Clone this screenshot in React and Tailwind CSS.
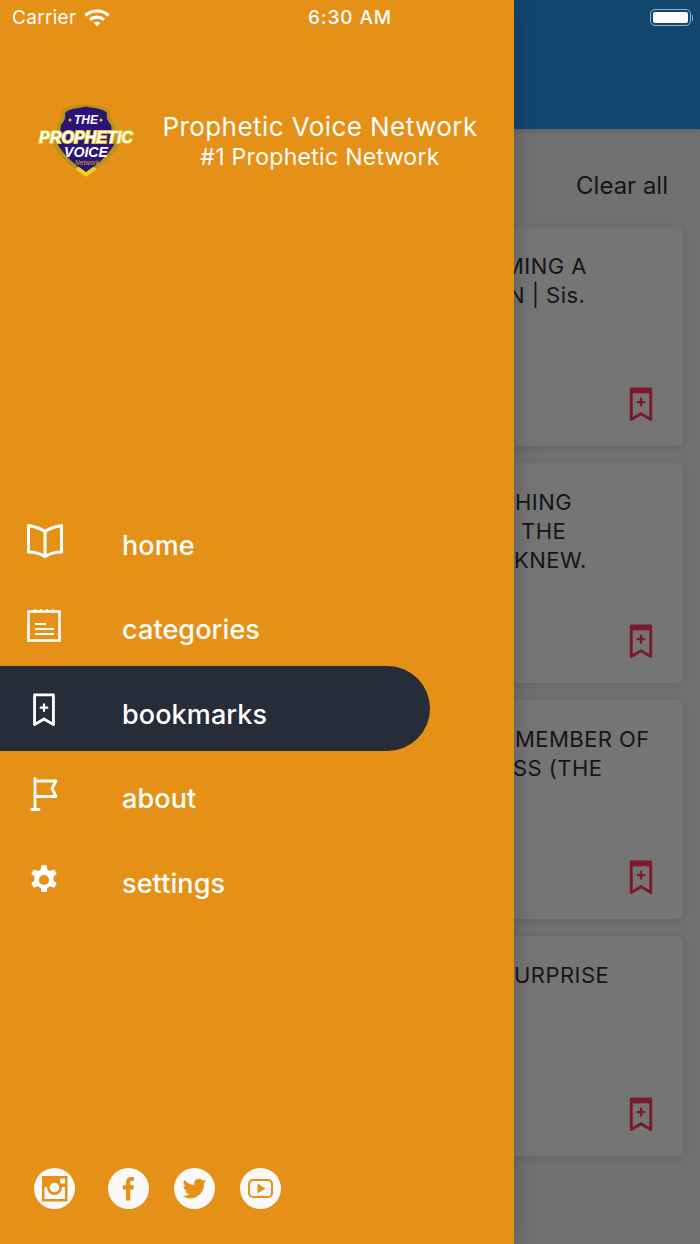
import React from "react";

const font = { fontFamily: "Inter, 'Liberation Sans', sans-serif" };

function BookmarkPlus({ className, top }) {
  return (
    <svg viewBox="0 0 24 36" className={className} fill="none" stroke="currentColor" strokeWidth="3" strokeLinejoin="round" strokeLinecap="round">
      <path d="M2 2H22V33.500L12 27.500L2 33.500Z" />
      {top && <path d="M2 4H22" strokeWidth="5" strokeLinecap="butt" />}
      <path d="M12 12V19M8.500 15.500H15.500" strokeWidth="2.400" />
    </svg>
  );
}

function BookIcon() {
  return (
    <svg viewBox="0 0 36 34" className="w-9 h-[34px]" fill="none" stroke="currentColor" strokeWidth="3" strokeLinejoin="round" strokeLinecap="round">
      <path d="M1.500 1.500C7 2.500 13 4 18 7.500C23 4 29 2.500 34.500 1.500V28C29 28 23.500 29 18 32.500C12.500 29 7 28 1.500 28Z" />
      <path d="M18 7.500V32" />
    </svg>
  );
}

function NotesIcon() {
  return (
    <svg viewBox="0 0 34 34" className="w-[34px] h-[34px]" fill="none" stroke="currentColor" strokeWidth="2.600" strokeLinecap="butt">
      <rect x="1.500" y="3.500" width="31" height="29" />
      <path d="M8 1V4M14 1V4M20 1V4M26 1V4" strokeWidth="1.800" />
      <path d="M8 16H19M8 21H27M8 26H27" strokeWidth="2" />
    </svg>
  );
}

function FlagIcon() {
  return (
    <svg viewBox="0 0 28 34" className="w-7 h-[34px]" fill="none" stroke="currentColor" strokeWidth="2.800" strokeLinecap="round" strokeLinejoin="round">
      <path d="M5 1.500V32.500M1.500 32.500H9" />
      <path d="M5 4H26L22 11.500L26 19.500H5" />
    </svg>
  );
}

function GearIcon() {
  return (
    <svg viewBox="0 0 24 24" className="w-[34px] h-[34px] mt-[2px]" fill="currentColor">
      <path fillRule="evenodd" d="M13.800 1.500h-3.600l-.5 3a7.500 7.500 0 0 0-2 1.150L4.800 4.600 3 7.700l2.350 1.950a7.600 7.600 0 0 0 0 2.700L3 14.300l1.800 3.100 2.900-1.050a7.500 7.500 0 0 0 2 1.150l.5 3h3.600l.5-3a7.500 7.500 0 0 0 2-1.150l2.900 1.050 1.800-3.100-2.350-1.950a7.600 7.600 0 0 0 0-2.700L21 7.700l-1.800-3.100-2.900 1.050a7.500 7.500 0 0 0-2-1.150ZM12 8.400a3.600 3.600 0 1 1 0 7.200 3.600 3.600 0 0 1 0-7.200Z" />
    </svg>
  );
}

function Logo() {
  return (
    <svg viewBox="0 0 100 76" className="w-[100px] h-[76px]" style={{ fontFamily: "'Liberation Sans', sans-serif" }}>
      <path d="M50 1C40 3 31 3 26 8C27 13 25 16 22 20L18 43C25 56 39 66 50 74C61 66 75 56 82 43L78 20C75 16 73 13 74 8C69 3 60 3 50 1Z" fill="#b8921a" />
      <path d="M50 3.500C41 5.500 33 5.500 29 10C30 15 28 18 25 22L22 42C29 54 41 63 50 70C59 63 71 54 78 42L75 22C72 18 70 15 71 10C67 5.500 59 5.500 50 3.500Z" fill="#2a1478" />
      <path d="M50 74L39 66L43 64L50 69L57 64L61 66Z" fill="#f4d21f" />
      <circle cx="34" cy="17" r="1.500" fill="#f1c40f" />
      <circle cx="65" cy="17" r="1.500" fill="#f1c40f" />
      <text x="50" y="21" textAnchor="middle" fontSize="12" fontStyle="italic" fontWeight="700" fill="#fff">THE</text>
      <text x="3" y="40" fontSize="16" fontStyle="italic" fontWeight="700" fill="#fff" stroke="#e8c52a" strokeWidth="2" paintOrder="stroke" textLength="94" lengthAdjust="spacingAndGlyphs">PROPHETIC</text>
      <text x="50" y="54" textAnchor="middle" fontSize="14" fontStyle="italic" fontWeight="700" fill="#fff" textLength="44" lengthAdjust="spacingAndGlyphs">VOICE</text>
      <text x="51" y="62" textAnchor="middle" fontSize="6.500" fontStyle="italic" fill="#d9a520">Network</text>
    </svg>
  );
}

function Instagram() {
  return (
    <svg viewBox="0 0 41 41" className="w-[41px] h-[41px]">
      <circle cx="20.500" cy="20.500" r="20.500" fill="#f9f9f9" />
      <rect x="8" y="8" width="25.500" height="25.500" fill="#e59016" />
      <rect x="10.500" y="19" width="20.500" height="12" fill="#f9f9f9" />
      <rect x="26" y="10.500" width="5" height="5" fill="#f9f9f9" />
      <circle cx="20.500" cy="19.500" r="7.500" fill="#e59016" />
      <circle cx="20.500" cy="19.500" r="4.800" fill="#f9f9f9" />
    </svg>
  );
}

function Facebook() {
  return (
    <svg viewBox="0 0 41 41" className="w-[41px] h-[41px]">
      <circle cx="20.500" cy="20.500" r="20.500" fill="#f9f9f9" />
      <path d="M18 32.500V21.500H14.800V17.200H18V14.300C18 10.800 20 9 23.100 9C24.300 9 25.400 9.100 25.900 9.200V13H23.700C22.400 13 22.300 13.700 22.300 14.700V17.200H25.800L25.300 21.500H22.300V32.500Z" fill="#e59016" />
    </svg>
  );
}

function Twitter() {
  return (
    <svg viewBox="0 0 41 41" className="w-[41px] h-[41px]">
      <circle cx="20.500" cy="20.500" r="20.500" fill="#f9f9f9" />
      <g transform="translate(8.500 8.500)">
        <path fill="#e59016" d="M24 4.600a9.800 9.800 0 0 1-2.800.8 4.900 4.900 0 0 0 2.200-2.700 9.900 9.900 0 0 1-3.100 1.200 4.900 4.900 0 0 0-8.400 4.500A14 14 0 0 1 1.700 3.200a4.900 4.900 0 0 0 1.500 6.600 4.900 4.900 0 0 1-2.200-.6 4.900 4.900 0 0 0 3.900 4.900 4.900 4.900 0 0 1-2.200.1 4.900 4.900 0 0 0 4.600 3.400A9.900 9.900 0 0 1 0 19.600 14 14 0 0 0 21.500 7.200c0-.2 0-.4 0-.6A10 10 0 0 0 24 4.600Z" />
      </g>
    </svg>
  );
}

function YouTube() {
  return (
    <svg viewBox="0 0 41 41" className="w-[41px] h-[41px]">
      <circle cx="20.500" cy="20.500" r="20.500" fill="#f9f9f9" />
      <rect x="8" y="11" width="25" height="19" rx="5" fill="#e59016" />
      <rect x="10" y="13" width="21" height="15" rx="3.500" fill="#f9f9f9" />
      <path d="M17.500 15.500L25.500 20.500L17.500 25.500Z" fill="#e59016" />
    </svg>
  );
}

function Wifi() {
  return (
    <svg viewBox="0 0 26 18" className="w-[26px] h-[18px]" fill="none" stroke="#fff" strokeLinecap="butt">
      <path d="M1.500 6.500C7.500 0.500 18.500 0.500 24.500 6.500" strokeWidth="3.200" />
      <path d="M6 10.800C10 7.300 16 7.300 20 10.800" strokeWidth="3.200" />
      <path d="M13 17.500L9.500 13.800C11.500 12.300 14.500 12.300 16.500 13.800Z" fill="#fff" stroke="none" />
    </svg>
  );
}

const cards = [
  [["MING A", 504], ["N | Sis.", 508]],
  [["HING", 515], ["THE", 521], ["KNEW.", 514]],
  [["MEMBER OF", 515], ["SS (THE", 513]],
  [["URPRISE", 514]],
];

const navItems = [
  { label: "home", icon: <BookIcon />, w: "pl-[27px]" },
  { label: "categories", icon: <NotesIcon />, w: "pl-[27px]" },
  { label: "bookmarks", icon: <BookmarkPlus className="w-[24px] h-[34px]" />, w: "pl-[32px]", active: true },
  { label: "about", icon: <FlagIcon />, w: "pl-[30px]" },
  { label: "settings", icon: <GearIcon />, w: "pl-[27px]" },
];

export default function App() {
  return (
    <div style={font} className="relative w-[700px] h-[1244px] overflow-hidden bg-[#717171]">
      {/* Page behind the drawer */}
      <div className="h-[129px] bg-[#11466f] shadow-[0_2px_4px_rgba(0,0,0,0.15)] flex justify-end pt-[9px] pr-[7px]">
        <div className="flex items-center h-[17px] gap-[1px]">
          <div className="w-[41px] h-[17px] rounded-[5px] border border-[#8fb0c8] p-[2px]">
            <div className="w-full h-full bg-white rounded-[2px]" />
          </div>
          <div className="w-[1.500px] h-[6px] bg-[#8fb0c8] rounded-r-sm" />
        </div>
      </div>
      <div className="flex justify-end pr-[32px] pt-[42px] h-[98px] text-[24px] leading-[30px] text-[#14161a]">Clear all</div>
      <div className="flex flex-col gap-[17px] px-[17px]">
        {cards.map((lines, i) => (
          <div key={i} className="relative h-[219.400px] rounded-[5px] bg-[#757575] shadow-[0_2px_10px_rgba(0,0,0,0.1)]">
            <div className="flex flex-col pt-[25px] text-[22px] leading-[29px] tracking-[0.45px] text-[#14161a]">
              {lines.map(([t, x]) => (
                <span key={t} style={{ marginLeft: x - 17 }}>{t}</span>
              ))}
            </div>
            <div className="absolute right-[30px] bottom-[24px] text-[#7c1a2b]">
              <BookmarkPlus top className="w-[24px] h-[35px]" />
            </div>
          </div>
        ))}
      </div>

      {/* Drawer */}
      <aside className="absolute inset-y-0 left-0 w-[514px] bg-[#e59016] text-white flex flex-col shadow-[0_0_22px_rgba(0,0,0,0.22)]">
        <div className="relative h-[36px] flex items-center pl-[12px] gap-[8px] text-[19px] tracking-[0.3px]">
          <span>Carrier</span>
          <Wifi />
          <span className="absolute left-0 w-[700px] text-center font-medium tracking-[0.9px] text-[19px]">6:30 AM</span>
        </div>
        <div className="flex items-center pl-[36px] pt-[67px]">
          <Logo />
          <div className="w-[368px] flex flex-col items-center">
            <span className="text-[26px] leading-[32px] tracking-[0.43px]">Prophetic Voice Network</span>
            <span className="text-[23px] leading-[28px] tracking-[0.3px]">#1 Prophetic Network</span>
          </div>
        </div>
        <nav className="mt-auto flex flex-col">
          {navItems.map((n) => (
            <div
              key={n.label}
              className={`flex items-center h-[84.500px] w-[430px] rounded-r-full ${n.active ? "bg-[#272c39]" : ""}`}
            >
              <div className={`w-[122px] shrink-0 flex pt-[3px] ${n.w}`}>{n.icon}</div>
              <span className="text-[27px] leading-[32px] font-medium tracking-[0.1px] pt-[13px]">{n.label}</span>
            </div>
          ))}
        </nav>
        <div className="flex items-center pl-[34px] pt-[248.500px] pb-[35px]">
          <Instagram />
          <div className="ml-[33px]"><Facebook /></div>
          <div className="ml-[25px]"><Twitter /></div>
          <div className="ml-[25px]"><YouTube /></div>
        </div>
      </aside>
    </div>
  );
}
